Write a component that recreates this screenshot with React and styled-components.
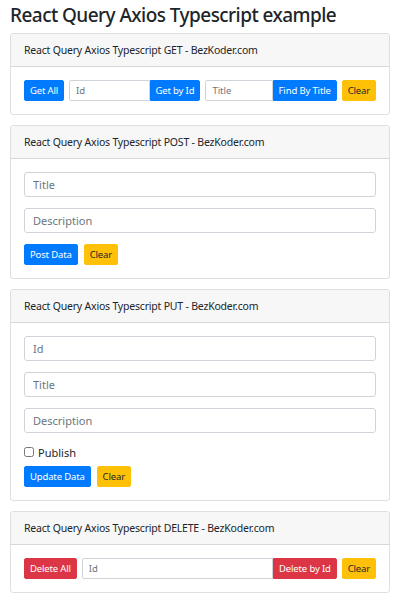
import React, { useState } from "react";
import styled, { createGlobalStyle } from "styled-components";

const GlobalStyle = createGlobalStyle`
  body {
    margin: 0;
    background: #fff;
    font-family: "Noto Sans", "Open Sans", sans-serif;
    color: #212529;
  }
  * { box-sizing: border-box; }
`;

const Page = styled.div`
  padding: 3px 10px 10px;
`;

const Title = styled.h3`
  margin: 0 0 6px;
  font-size: 19px;
  line-height: 24px;
  font-weight: 500;
  letter-spacing: -0.55px;
`;

const Card = styled.div`
  border: 1px solid rgba(0, 0, 0, 0.125);
  border-radius: 3px;
  margin-bottom: 10px;
  overflow: hidden;
`;

const CardHeader = styled.div`
  background: #f7f7f7;
  border-bottom: 1px solid rgba(0, 0, 0, 0.125);
  padding: 10px 13px;
  font-size: 10.5px;
  line-height: 12px;
  letter-spacing: -0.2px;
`;

const CardBody = styled.div`
  padding: 13px 13px;
  display: flex;
  flex-direction: column;
  gap: 11px;
`;

const Row = styled.div`
  display: flex;
  align-items: center;
  gap: 5px;
`;

const InputGroup = styled.div`
  display: flex;
  flex: 1 1 0;
  min-width: 0;
`;

const Input = styled.input`
  display: block;
  width: 100%;
  height: ${({ $small }) => ($small ? "21px" : "25px")};
  padding: 0 ${({ $small }) => ($small ? "6px" : "8px")};
  font-family: inherit;
  font-size: ${({ $small }) => ($small ? "9.5px" : "11px")};
  color: #495057;
  border: 1px solid #ced4da;
  border-radius: ${({ $grouped }) => ($grouped ? "2px 0 0 2px" : "3px")};
  outline: none;
  flex: ${({ $grouped }) => ($grouped ? "1 1 0" : "none")};
  min-width: 0;

  &::placeholder {
    color: #6c757d;
  }
`;

const colors = {
  primary: { bg: "#007bff", fg: "#fff" },
  warning: { bg: "#ffc107", fg: "#212529" },
  danger: { bg: "#dc3545", fg: "#fff" },
};

const Button = styled.button`
  flex: none;
  height: 21px;
  padding: 0 5px;
  font-family: inherit;
  font-size: 9.5px;
  line-height: 1;
  letter-spacing: -0.15px;
  white-space: nowrap;
  border: 1px solid ${({ $variant }) => colors[$variant].bg};
  background: ${({ $variant }) => colors[$variant].bg};
  color: ${({ $variant }) => colors[$variant].fg};
  border-radius: ${({ $grouped }) => ($grouped ? "0 2px 2px 0" : "2px")};
  cursor: pointer;
`;

const ButtonRow = styled.div`
  display: flex;
  gap: 6px;
  margin-top: ${({ $tight }) => ($tight ? "-5px" : "0")};
`;

const CheckLabel = styled.label`
  display: flex;
  align-items: center;
  gap: 4px;
  height: 16px;
  font-size: 11px;
  color: #212529;

  input {
    margin: 0;
    width: 10px;
    height: 10px;
  }
`;

const App = () => {
  const [published, setPublished] = useState(false);

  return (
    <Page>
      <GlobalStyle />
      <Title>React Query Axios Typescript example</Title>

      <Card>
        <CardHeader>React Query Axios Typescript GET - BezKoder.com</CardHeader>
        <CardBody>
          <Row>
            <Button $variant="primary">Get All</Button>
            <InputGroup>
              <Input $small $grouped placeholder="Id" />
              <Button $variant="primary" $grouped>
                Get by Id
              </Button>
            </InputGroup>
            <InputGroup>
              <Input $small $grouped placeholder="Title" />
              <Button $variant="primary" $grouped>
                Find By Title
              </Button>
            </InputGroup>
            <Button $variant="warning">Clear</Button>
          </Row>
        </CardBody>
      </Card>

      <Card>
        <CardHeader>React Query Axios Typescript POST - BezKoder.com</CardHeader>
        <CardBody>
          <Input placeholder="Title" />
          <Input placeholder="Description" />
          <ButtonRow>
            <Button $variant="primary">Post Data</Button>
            <Button $variant="warning">Clear</Button>
          </ButtonRow>
        </CardBody>
      </Card>

      <Card>
        <CardHeader>React Query Axios Typescript PUT - BezKoder.com</CardHeader>
        <CardBody>
          <Input placeholder="Id" />
          <Input placeholder="Title" />
          <Input placeholder="Description" />
          <CheckLabel>
            <input
              type="checkbox"
              checked={published}
              onChange={(e) => setPublished(e.target.checked)}
            />
            Publish
          </CheckLabel>
          <ButtonRow $tight>
            <Button $variant="primary">Update Data</Button>
            <Button $variant="warning">Clear</Button>
          </ButtonRow>
        </CardBody>
      </Card>

      <Card>
        <CardHeader>React Query Axios Typescript DELETE - BezKoder.com</CardHeader>
        <CardBody>
          <Row>
            <Button $variant="danger">Delete All</Button>
            <InputGroup>
              <Input $small $grouped placeholder="Id" />
              <Button $variant="danger" $grouped>
                Delete by Id
              </Button>
            </InputGroup>
            <Button $variant="warning">Clear</Button>
          </Row>
        </CardBody>
      </Card>
    </Page>
  );
};

export default App;
